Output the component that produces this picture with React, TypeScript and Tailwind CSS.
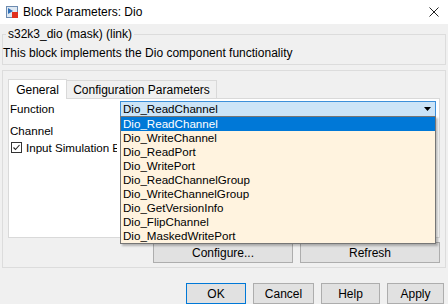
import React from "react";

const items = [
  "Dio_ReadChannel",
  "Dio_WriteChannel",
  "Dio_ReadPort",
  "Dio_WritePort",
  "Dio_ReadChannelGroup",
  "Dio_WriteChannelGroup",
  "Dio_GetVersionInfo",
  "Dio_FlipChannel",
  "Dio_MaskedWritePort",
];

function BlockIcon() {
  return (
    <svg width="12" height="12" viewBox="0 0 12 12">
      <rect x="0.5" y="0.5" width="11" height="11" fill="#dfe9f3" stroke="#6d8bb0" />
      <path d="M2 2 L7 5 L2 8 Z" fill="#2f6fb8" />
      <rect x="6" y="6" width="6" height="6" fill="#e0301e" />
    </svg>
  );
}

function Btn({ children, w, primary }: { children: React.ReactNode; w: string; primary?: boolean }) {
  return (
    <button
      className={`${w} h-[21px] bg-[#e1e1e1] border ${primary ? "border-[#0078d7]" : "border-[#adadad]"} text-[12px] text-black leading-none`}
    >
      {children}
    </button>
  );
}

export default function App() {
  return (
    <div
      className="w-[448px] h-[304px] overflow-hidden bg-[#f0f0f0] text-[11.6px] text-black"
      style={{ fontFamily: '"Liberation Sans", Arial, sans-serif' }}
    >
      {/* title bar */}
      <div className="h-[24px] bg-white flex items-center pl-[6px] pr-[9px]">
        <BlockIcon />
        <span className="ml-[5px] text-[12px]">Block Parameters: Dio</span>
        <svg className="ml-auto" width="10" height="10" viewBox="0 0 10 10">
          <path d="M0.5 0.5 L9.5 9.5 M9.5 0.5 L0.5 9.5" stroke="#222" strokeWidth="1" />
        </svg>
      </div>

      <div className="px-[2px]">
        {/* mask group */}
        <fieldset className="mt-[3px] border border-[#dcdcdc] h-[38px] px-0 pt-[4px]">
          <legend className="ml-[3px] px-[2px] text-[12px] leading-[15px]">s32k3_dio (mask) (link)</legend>
          <div className="leading-[15px] text-[12px]">This block implements the Dio component functionality</div>
        </fieldset>

        {/* parameters group */}
        <div className="mt-[5px] border border-[#dcdcdc] h-[198px] pt-[7px] px-[5px]">
          <div className="flex items-end h-[20px]">
            <div className="w-[59px] h-[20px] bg-white border border-b-0 border-[#d9d9d9] flex items-center justify-center relative z-10 top-[1px] text-[12px]">
              General
            </div>
            <div className="w-[150px] h-[18px] border border-l-0 border-b-0 border-[#d9d9d9] flex items-center justify-center text-[12px]">
              Configuration Parameters
            </div>
          </div>
          <div className="relative h-[140px] bg-white border border-[#d9d9d9] px-[1px] pt-[2px]">
            <div className="flex items-center h-[15px]">
              <span className="w-[110px]">Function</span>
              <div className="relative flex-1 mr-[2px]">
                <div className="h-[16px] bg-[#cce4f7] border border-[#3c8fd9] flex items-center pl-[2px] pr-[4px]">
                  <span>Dio_ReadChannel</span>
                  <svg className="ml-auto" width="7" height="4" viewBox="0 0 7 4">
                    <path d="M0 0 H7 L3.5 4 Z" fill="#000" />
                  </svg>
                </div>
                {/* open dropdown list */}
                <div className="absolute left-0 right-0 top-[15px] z-20 bg-[#fff3df] border border-[#767676] shadow-[2px_2px_2px_rgba(0,0,0,0.25)]">
                  {items.map((it, i) => (
                    <div
                      key={it}
                      className={`h-[14px] leading-[14px] pl-[2px] ${i === 0 ? "bg-[#0078d7] text-white" : ""}`}
                    >
                      {it}
                    </div>
                  ))}
                </div>
              </div>
            </div>
            <div className="h-[15px] mt-[7px] flex items-center">Channel</div>
            <div className="h-[15px] mt-[2px] flex items-center gap-[4px] pl-[1px]">
              <span className="w-[11px] h-[11px] shrink-0 border border-[#333] bg-white flex items-center justify-center">
                <svg width="9" height="9" viewBox="0 0 9 9">
                  <path d="M1.5 4.5 L3.5 6.5 L7.5 2" stroke="#222" strokeWidth="1.1" fill="none" />
                </svg>
              </span>
              <span className="w-[91px] overflow-hidden whitespace-nowrap">Input Simulation Enable</span>
            </div>
          </div>
          <div className="flex justify-end gap-[7px] mt-[4px]">
            <Btn w="w-[140px]">Configure...</Btn>
            <Btn w="w-[140px]">Refresh</Btn>
          </div>
        </div>

        {/* dialog buttons */}
        <div className="flex justify-end gap-[7px] mt-[15px] pr-[2px]">
          <Btn w="w-[60px]" primary>OK</Btn>
          <Btn w="w-[61px]">Cancel</Btn>
          <Btn w="w-[59px]">Help</Btn>
          <Btn w="w-[57px]">Apply</Btn>
        </div>
      </div>
    </div>
  );
}
